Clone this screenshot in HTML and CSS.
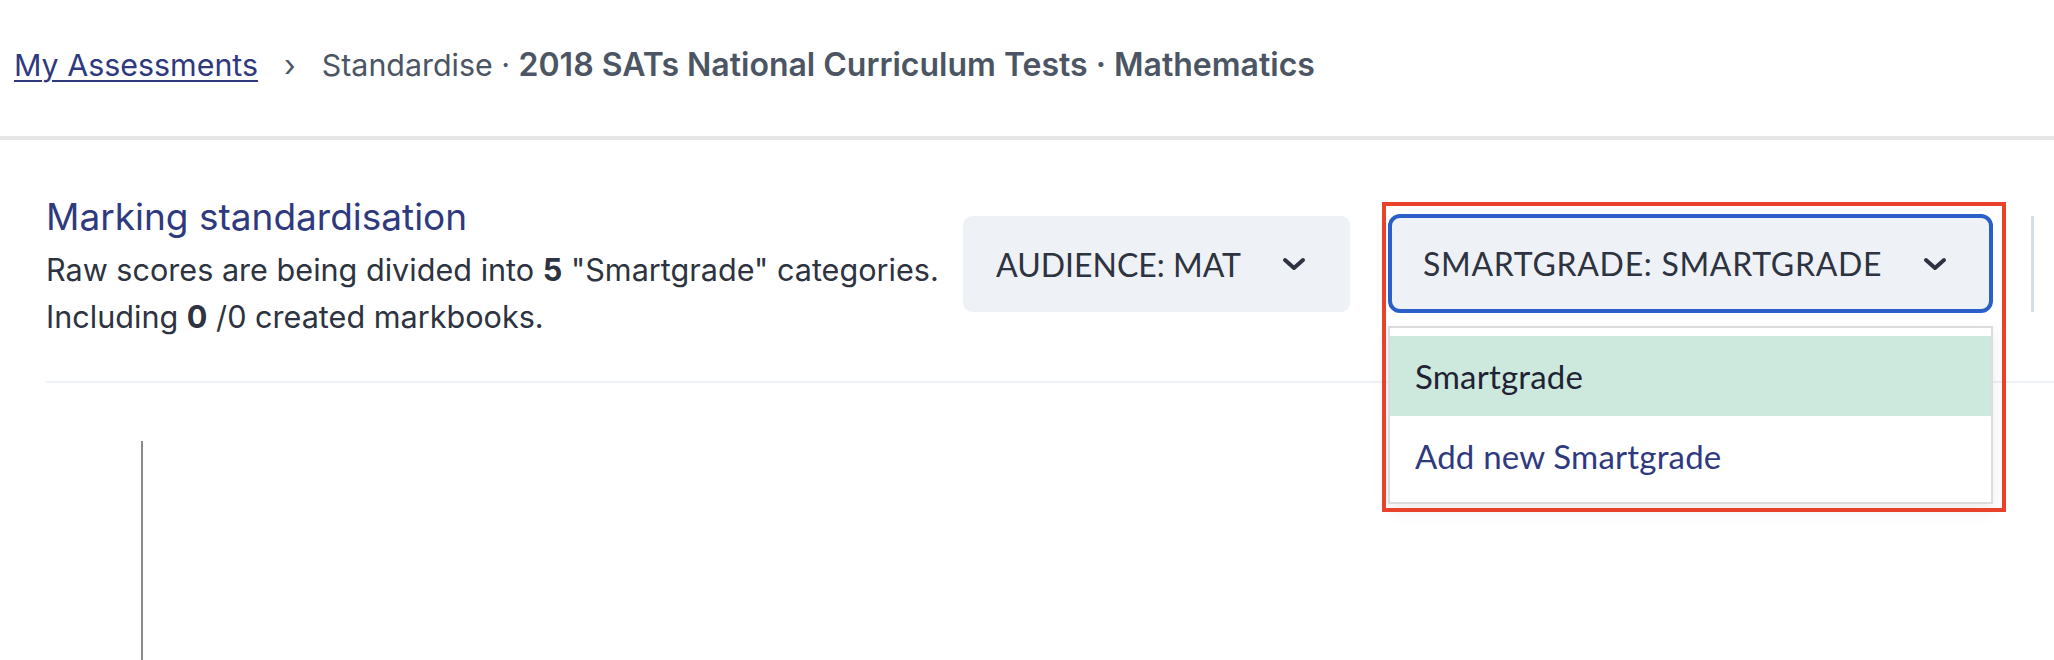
FILE: index.html
```html
<!DOCTYPE html>
<html lang="en">
<head>
<meta charset="utf-8">
<title>Standardise · 2018 SATs National Curriculum Tests · Mathematics</title>
<link rel="stylesheet" href="styles.css">
</head>
<body>
  <header class="topbar">
    <nav class="crumbs">
      <a class="crumb-link" href="#">My Assessments</a>
      <span class="crumb-sep">›</span>
      <span class="crumb-current">Standardise · <strong>2018 SATs National Curriculum Tests · Mathematics</strong></span>
    </nav>
  </header>

  <main class="content">
    <section class="toolbar">
      <div class="intro">
        <h2 class="intro-title">Marking standardisation</h2>
        <p class="intro-text">Raw scores are being divided into <b>5</b> "Smartgrade" categories.<br>Including <b>0</b> /0 created markbooks.</p>
      </div>

      <button class="select select-audience" type="button">
        <span class="select-label">AUDIENCE: MAT</span>
        <svg class="chevron" viewBox="0 0 24 14" width="24" height="14" aria-hidden="true"><path d="M3 3 L12 11 L21 3" fill="none" stroke="#2d3340" stroke-width="4" stroke-linecap="round" stroke-linejoin="round"/></svg>
      </button>

      <div class="smart-wrap">
        <button class="select select-smart" type="button">
          <span class="select-label select-label-wide">SMARTGRADE: SMARTGRADE</span>
          <svg class="chevron" viewBox="0 0 24 14" width="24" height="14" aria-hidden="true"><path d="M3 3 L12 11 L21 3" fill="none" stroke="#2d3340" stroke-width="4" stroke-linecap="round" stroke-linejoin="round"/></svg>
        </button>
        <ul class="menu">
          <li class="menu-item menu-item-active">Smartgrade</li>
          <li class="menu-item menu-item-add">Add new Smartgrade</li>
        </ul>
        <div class="annotation"></div>
      </div>

      <div class="next-select"></div>
    </section>

    <div class="separator"></div>

    <section class="chart">
      <div class="chart-axis"></div>
    </section>
  </main>
</body>
</html>
```
FILE: styles.css
```css
html, body {
  margin: 0;
  padding: 0;
  background: #ffffff;
  overflow: hidden;
}

body {
  font-family: Inter, "Noto Sans", "Liberation Sans", sans-serif;
  color: #2d3340;
  width: 2054px;
  height: 660px;
}

.topbar {
  height: 140px;
  box-sizing: border-box;
  padding: 0 0 7px 14px;
  display: flex;
  align-items: center;
  border-bottom: 4px solid #e6e6e6;
}

.crumbs {
  display: flex;
  align-items: baseline;
  font-size: 30.4px;
  line-height: 40px;
  color: #4b5563;
  white-space: nowrap;
}

.crumb-link {
  color: #2f3a7e;
  text-decoration: underline;
  text-decoration-thickness: 2px;
  text-underline-offset: 4px;
}

.crumb-sep {
  margin: 0 26px 0 26px;
  color: #4b5563;
}

.crumb-current strong {
  font-size: 32px;
  font-weight: 600;
}

.content {
  padding: 54px 0 0 46px;
}

.toolbar {
  display: flex;
  align-items: flex-start;
  margin-bottom: 41px;
}

.intro {
  flex: none;
  width: 917px;
}

.intro-title {
  margin: 0 0 6px;
  font-size: 37px;
  line-height: 46px;
  font-weight: 400;
  color: #2f3a7e;
}

.intro-text {
  margin: 0;
  font-size: 30.6px;
  line-height: 47px;
  color: #2d3340;
  white-space: nowrap;
}

.intro-text b {
  font-weight: 700;
}

.select {
  flex: none;
  display: flex;
  align-items: center;
  justify-content: space-between;
  box-sizing: border-box;
  margin: 0;
  background: #eef1f5;
  font-family: Lato, "Open Sans", "Liberation Sans", sans-serif;
  font-size: 32px;
  color: #2d3340;
  letter-spacing: 0;
  cursor: pointer;
  white-space: nowrap;
}

.select-label-wide {
  letter-spacing: 0.7px;
}

.select-audience {
  width: 387px;
  height: 96px;
  margin-top: 22px;
  padding: 0 44px 0 33px;
  border: none;
  border-radius: 9px;
}

.smart-wrap {
  position: relative;
  flex: none;
  margin-left: 38px;
  margin-top: 20px;
  width: 605px;
}

.select-smart {
  width: 605px;
  height: 99px;
  padding: 0 42px 0 31px;
  border: 4px solid #2a5ec8;
  border-radius: 12px;
}

.chevron {
  display: block;
  flex: none;
}

.menu {
  position: absolute;
  left: 0;
  top: 112px;
  width: 605px;
  box-sizing: border-box;
  margin: 0;
  padding: 8px 0 6px;
  list-style: none;
  background: #ffffff;
  border: 2px solid #dcdcdc;
  box-shadow: 0 6px 16px rgba(0, 0, 0, 0.08);
  font-family: Lato, "Open Sans", "Liberation Sans", sans-serif;
  font-size: 33px;
  letter-spacing: 0.2px;
  z-index: 2;
}

.menu-item {
  height: 80px;
  display: flex;
  align-items: center;
  padding-left: 25px;
}

.menu-item-active {
  background: #cde9de;
  color: #1f2333;
}

.menu-item-add {
  color: #2f3a7e;
}

.annotation {
  position: absolute;
  left: -6px;
  top: -12px;
  width: 624px;
  height: 310px;
  box-sizing: border-box;
  border: 4px solid #e8412c;
  pointer-events: none;
  z-index: 3;
}

.next-select {
  flex: none;
  margin-left: 38px;
  margin-top: 22px;
  width: 200px;
  height: 96px;
  border-left: 3px solid #d5dde6;
}

.separator {
  height: 2px;
  background: #eef1f5;
}

.chart {
  padding: 58px 0 0 95px;
}

.chart-axis {
  width: 2px;
  height: 300px;
  background: #8a8a8a;
}
```
